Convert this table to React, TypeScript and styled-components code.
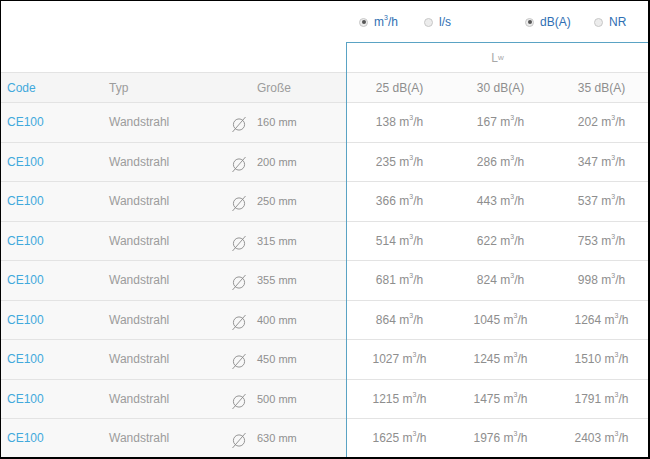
import React from "react";
import styled, { createGlobalStyle } from "styled-components";

const Global = createGlobalStyle`
  html, body { margin: 0; padding: 0; background: #fff; }
  body { font-family: "Liberation Sans", Arial, sans-serif; }
`;

const Frame = styled.div`
  width: 650px;
  height: 459px;
  box-sizing: border-box;
  border-style: solid;
  border-color: #000;
  border-width: 1px 2px 2px 1px;
  overflow: hidden;
  display: flex;
  flex-direction: column;
  background: #fff;
`;

const TopBar = styled.div`
  height: 41px;
  flex: none;
  display: flex;
  align-items: center;
  padding-left: 358px;
`;

const RadioGroup = styled.div<{ $w: number }>`
  display: flex;
  align-items: center;
  width: ${(p) => p.$w}px;
  padding-top: 1px;
`;

const RadioItem = styled.label<{ $w: number }>`
  display: flex;
  align-items: center;
  width: ${(p) => p.$w}px;
  font-size: 12px;
  color: #2f6fb3;
  gap: 6px;
`;

const RadioDot = styled.span<{ $on?: boolean }>`
  width: 9px;
  height: 9px;
  box-sizing: border-box;
  border-radius: 50%;
  border: 1px solid #c8c8c8;
  background: #ececec;
  display: inline-flex;
  align-items: center;
  justify-content: center;
  &::after {
    content: "";
    width: 4px;
    height: 4px;
    border-radius: 50%;
    background: ${(p) => (p.$on ? "#555" : "transparent")};
  }
`;

const Sup = styled.sup`
  font-size: 7px;
  vertical-align: top;
  line-height: 1;
  position: relative;
  top: -1px;
`;

const Body = styled.div`
  flex: 1;
  display: grid;
  grid-template-columns: 345px 1fr;
  min-height: 0;
`;

const LeftPane = styled.div`
  display: flex;
  flex-direction: column;
`;

const Spacer = styled.div`
  height: 30px;
  flex: none;
`;

const LeftRow = styled.div<{ $head?: boolean }>`
  display: grid;
  grid-template-columns: 102px 120px 28px 1fr;
  align-items: center;
  box-sizing: border-box;
  height: ${(p) => (p.$head ? "31px" : "39.5px")};
  flex: none;
  padding-left: 6px;
  background: ${(p) => (p.$head ? "#f5f5f5" : "#f8f8f8")};
  border-top: ${(p) => (p.$head ? "1px solid #e3e3e3" : "none")};
  border-bottom: 1px solid #e3e3e3;
  font-size: 12px;
  color: #9a9a9a;
`;

const CodeCell = styled.span`
  color: #42a9dc;
`;

const TypeCell = styled.span`
  color: #9c9c9c;
`;

const SizeCell = styled.span<{ $head?: boolean }>`
  color: ${(p) => (p.$head ? "#9c9c9c" : "#909090")};
  font-size: ${(p) => (p.$head ? "12px" : "11px")};
`;

const DiaIcon = styled.svg`
  width: 16px;
  height: 18px;
  margin-left: 2px;
  margin-top: 4px;
`;

const RightPane = styled.div`
  border-top: 1px solid #5aa3c4;
  border-left: 1px solid #5aa3c4;
  display: flex;
  flex-direction: column;
  overflow: hidden;
`;

const LwRow = styled.div`
  height: 30px;
  flex: none;
  box-sizing: border-box;
  border-bottom: 1px solid #e3e3e3;
  display: flex;
  align-items: center;
  justify-content: center;
  font-size: 12px;
  color: #a8a8a8;
`;

const Sub = styled.sub`
  font-size: 8px;
  vertical-align: -2px;
`;

const ValRow = styled.div<{ $head?: boolean }>`
  display: grid;
  grid-template-columns: 101px 101px 101px;
  padding-left: 2px;
  align-items: center;
  box-sizing: border-box;
  height: ${(p) => (p.$head ? "30px" : "39.5px")};
  flex: none;
  border-bottom: 1px solid #e3e3e3;
  background: ${(p) => (p.$head ? "#fbfbfb" : "#fff")};
  font-size: 12px;
  color: #8e8e8e;
`;

const ValCell = styled.span`
  text-align: center;
  white-space: nowrap;
`;

const sizes = [160, 200, 250, 315, 355, 400, 450, 500, 630];
const values = [
  [138, 167, 202],
  [235, 286, 347],
  [366, 443, 537],
  [514, 622, 753],
  [681, 824, 998],
  [864, 1045, 1264],
  [1027, 1245, 1510],
  [1215, 1475, 1791],
  [1625, 1976, 2403],
];

const Diameter = () => (
  <DiaIcon viewBox="0 0 16 18">
    <circle cx="8" cy="9.5" r="5.6" fill="none" stroke="#8a8a8a" strokeWidth="0.9" />
    <line x1="1.5" y1="17" x2="14.5" y2="2" stroke="#8a8a8a" strokeWidth="0.9" />
  </DiaIcon>
);

const Flow = ({ v }: { v: number }) => (
  <>
    {v} m<Sup>3</Sup>/h
  </>
);

export default function App() {
  return (
    <>
      <Global />
      <Frame>
        <TopBar>
          <RadioGroup $w={166}>
            <RadioItem $w={65}>
              <RadioDot $on />
              <span>
                m<Sup>3</Sup>/h
              </span>
            </RadioItem>
            <RadioItem $w={60}>
              <RadioDot />
              <span>l/s</span>
            </RadioItem>
          </RadioGroup>
          <RadioGroup $w={110}>
            <RadioItem $w={69}>
              <RadioDot $on />
              <span>dB(A)</span>
            </RadioItem>
            <RadioItem $w={40}>
              <RadioDot />
              <span>NR</span>
            </RadioItem>
          </RadioGroup>
        </TopBar>
        <Body>
          <LeftPane>
            <Spacer />
            <LeftRow $head>
              <CodeCell>Code</CodeCell>
              <TypeCell>Typ</TypeCell>
              <span />
              <SizeCell $head>Große</SizeCell>
            </LeftRow>
            {sizes.map((s) => (
              <LeftRow key={s}>
                <CodeCell>CE100</CodeCell>
                <TypeCell>Wandstrahl</TypeCell>
                <Diameter />
                <SizeCell>{s} mm</SizeCell>
              </LeftRow>
            ))}
          </LeftPane>
          <RightPane>
            <LwRow>
              L<Sub>w</Sub>
            </LwRow>
            <ValRow $head>
              <ValCell>25 dB(A)</ValCell>
              <ValCell>30 dB(A)</ValCell>
              <ValCell>35 dB(A)</ValCell>
            </ValRow>
            {values.map((row, i) => (
              <ValRow key={i}>
                {row.map((v, j) => (
                  <ValCell key={j}>
                    <Flow v={v} />
                  </ValCell>
                ))}
              </ValRow>
            ))}
          </RightPane>
        </Body>
      </Frame>
    </>
  );
}
